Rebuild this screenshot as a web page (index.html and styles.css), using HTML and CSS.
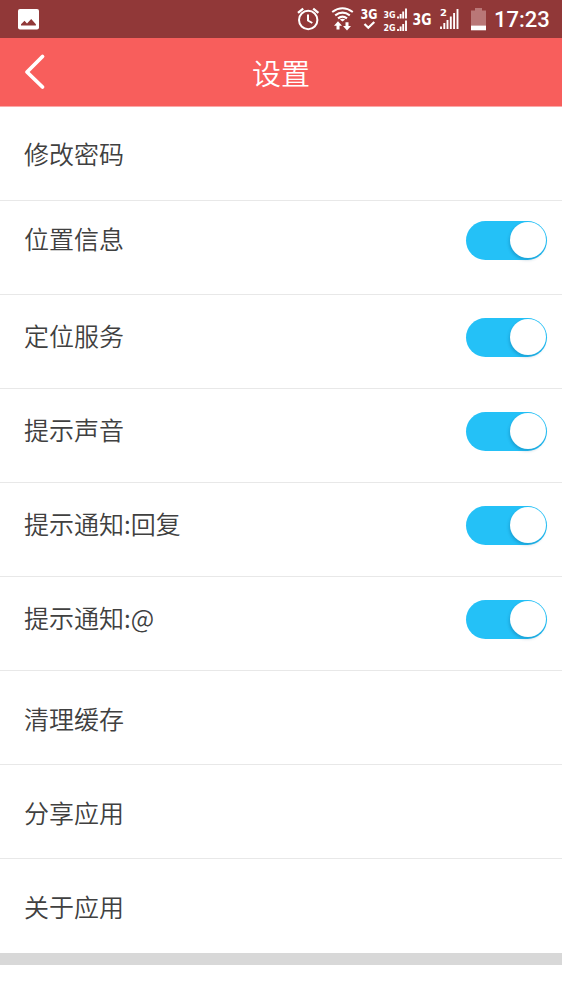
FILE: index.html
```html
<!DOCTYPE html>
<html lang="zh-CN">
<head>
<meta charset="utf-8">
<title>设置</title>
<link rel="stylesheet" href="styles.css">
</head>
<body>
<div class="status">
  <svg class="picture" width="22" height="38" viewBox="18 0 22 38"><rect x="18" y="9" width="21" height="20.5" rx="2" fill="#fff"/><path d="M21 25.500v-1.200l3.500-3.600 2.500 2.800 4.200-4.400 4.700 5.200v1.200z" fill="#913838"/></svg>
  <div class="indicators">
    <svg width="24" height="38" viewBox="296 0 24 38" fill="none" stroke="#fff" stroke-width="2"><circle cx="308.200" cy="20" r="9.200"/><path d="M308 14.500V20.500L312.300 23"/><path d="M298 12.800L303.200 8.600M318.400 12.800L313.200 8.600" stroke-width="2.300"/></svg>
    <svg class="wifi" width="24" height="38" viewBox="330 0 24 38" fill="none" stroke="#fff" stroke-width="2.100"><path d="M332.200 12Q342.500 4.600 352.800 12M335.200 15.300Q342.500 9.900 349.800 15.300M338 18.400Q342.500 14.900 347 18.400"/><path d="M339.800 19.600L342.500 21.400l2.700-1.800Q342.500 17.700 339.800 19.600zM338 21.300l4 4.400h-2.500v3.800h-3v-3.800H334zM347 30.500l-4-4.400h2.500V22.300h3v3.800h2.500z" fill="#fff" stroke="none"/></svg>
    <svg class="net" width="18" height="38" viewBox="360 0 18 38"><text class="net-text" x="360.500" y="19.300" font-size="13.500" textLength="17" lengthAdjust="spacingAndGlyphs">3G</text><path d="M364.500 24l3.800 3.800 6-5.800" fill="none" stroke="#fff" stroke-width="2.200"/></svg>
    <svg class="dual" width="25" height="38" viewBox="383 0 25 38"><text class="net-text" x="383.500" y="18.300" font-size="9" textLength="12" lengthAdjust="spacingAndGlyphs">3G</text><text class="net-text" x="383.500" y="31" font-size="9" textLength="12" lengthAdjust="spacingAndGlyphs">2G</text><path d="M398 18.500v-2M400.600 18.500v-4.500M403.200 18.500v-7M406 18.500V8.500M398 31v-2M400.600 31v-4.500M403.200 31v-7M406 31V20.500" stroke="#fff" stroke-width="1.900"/></svg>
    <svg class="net3g" width="22" height="38" viewBox="411 0 22 38"><text class="net-text" x="412.500" y="25" font-size="15.500" textLength="19" lengthAdjust="spacingAndGlyphs">3G</text></svg>
    <svg class="signal" width="20" height="38" viewBox="439 0 20 38"><text class="net-text" x="440" y="15.800" font-size="9.500" textLength="7" lengthAdjust="spacingAndGlyphs">2</text><path d="M441 29v-2.500M444.300 29v-6M447.500 29v-9M450.800 29V16.500M454.100 29V13M457.500 29V9" stroke="#fff" stroke-width="1.900"/></svg>
    <svg class="battery" width="16" height="38" viewBox="471 0 16 38"><path d="M471 10.500h4V8h7v2.500h4V25.500h-15z" fill="#b97777"/><path d="M471 25.500h15v4.800h-15z" fill="#fff"/></svg>
    <span class="time">17:23</span>
  </div>
</div>
<header class="header">
  <svg class="back" width="22" height="38" viewBox="0 0 22 38"><path d="M18.500 3.500L3 19l15.500 15" fill="none" stroke="#fff" stroke-width="3.800" stroke-linecap="round" stroke-linejoin="round"/></svg>
  <h1 class="title">设置</h1>
</header>
<main class="list">
  <div class="row"><span>修改密码</span></div>
  <div class="row toggle first"><span>位置信息</span><i class="switch"></i></div>
  <div class="row toggle"><span>定位服务</span><i class="switch"></i></div>
  <div class="row toggle"><span>提示声音</span><i class="switch"></i></div>
  <div class="row toggle"><span>提示通知:回复</span><i class="switch"></i></div>
  <div class="row toggle"><span>提示通知:@</span><i class="switch"></i></div>
  <div class="row lower"><span>清理缓存</span></div>
  <div class="row lower"><span>分享应用</span></div>
  <div class="row lower"><span>关于应用</span></div>
</main>
<div class="divider"></div>
</body>
</html>
```
FILE: styles.css
```css
* { box-sizing: border-box; }
body {
  margin: 0;
  background: #fff;
  color: #404040;
  font-family: "Noto Sans CJK SC", sans-serif;
}
svg { display: block; flex: none; overflow: visible; }
.status {
  display: flex;
  justify-content: space-between;
  height: 38px;
  padding: 0 12px 0 18px;
  background: #913838;
}
.indicators { display: flex; width: 254px; }
.wifi { margin-left: 10px; }
.net { margin-left: 6px; }
.dual { margin-left: 5px; }
.net3g { margin-left: 3px; }
.signal { margin-left: 6px; }
.battery { margin-left: 12px; }
.net-text { font-family: "DejaVu Sans", sans-serif; font-weight: 700; fill: #fff; }
.time {
  margin-left: 7px;
  color: #fff;
  font: 500 22px/40px Roboto, sans-serif;
}
.header {
  display: grid;
  grid-template-columns: 80px 1fr 80px;
  align-items: center;
  height: 69px;
  background: #f85e5c;
  border-bottom: 1px solid #fba9a8;
}
.back { margin-left: 24px; }
.title {
  margin: 0;
  color: #fff;
  font-size: 29px;
  font-weight: 350;
  line-height: 40px;
  text-align: center;
}
.row {
  display: flex;
  justify-content: space-between;
  height: 94px;
  padding: 28px 15px 0 24px;
  border-bottom: 1px solid #e8e8e8;
  font-size: 25px;
  font-weight: 350;
  line-height: 36px;
}
.row:last-child { border-bottom: 0; }
.toggle { padding-top: 23px; line-height: 34px; }
.first { padding-top: 20px; }
.lower { padding-top: 29px; }
.switch {
  width: 81px;
  height: 39px;
  padding: 1px 2px 2px 44px;
  border-radius: 20px;
  background: #24c1f7;
}
.switch::before {
  content: "";
  display: block;
  width: 36px;
  height: 36px;
  border-radius: 50%;
  background: #fff;
  box-shadow: -1px 2px 3px rgba(0, 70, 120, .25);
}
.divider { height: 12px; background: #d8d8d8; }
```
